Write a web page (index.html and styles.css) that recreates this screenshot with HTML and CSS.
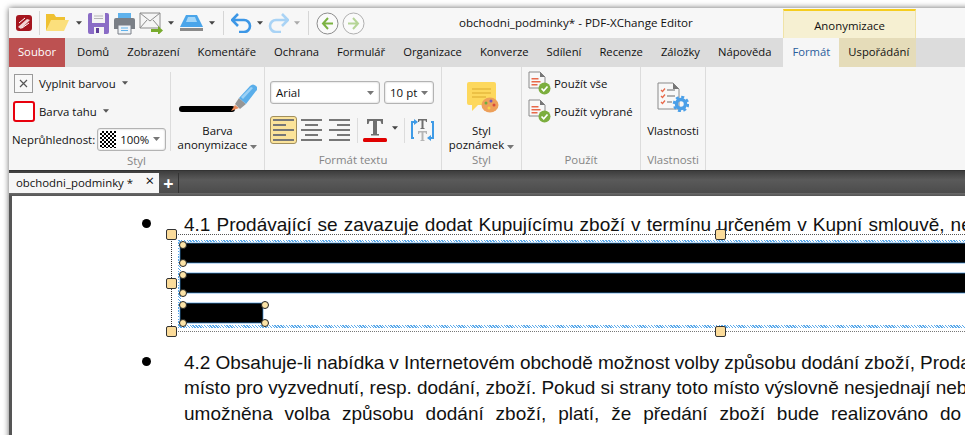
FILE: index.html
```html
<!DOCTYPE html>
<html lang="cs">
<head>
    <meta charset="UTF-8">
    <title>obchodni_podminky* - PDF-XChange Editor</title>
    <link rel="stylesheet" href="styles.css">
</head>
<body>
    <svg class="defs" width="0" height="0">
        <defs>
            <symbol id="doc-check" viewBox="0 0 24 24">
                <path d="M2 1h11l5 5v11H2z" fill="#f8f8f8" stroke="#8a8a8a"/>
                <path d="M13 1v5h5z" fill="#777"/>
                <path d="M4.500 7h7v1.500h-7zM4.500 10h9v1.500h-9zM4.500 13h6v1.500h-6z" fill="#e8694a"/>
                <circle cx="17.500" cy="17.500" r="6" fill="#7cae3e"/>
                <path d="M14.500 17.500l2.200 2.300 3.800-4.300" fill="none" stroke="#fff" stroke-width="1.700"/>
            </symbol>
            <symbol id="caret" viewBox="0 0 7 4">
                <path d="M0 0h7L3.500 4z"/>
            </symbol>
            <symbol id="lines-center" viewBox="0 0 21 24">
                <path d="M0 1h21v2H0zM4 6h13v2H4zM0 11h21v2H0zM4 16h13v2H4zM0 21h21v2H0z" fill="#777"/>
            </symbol>
        </defs>
    </svg>

    <div class="window">
        <div class="titlebar">
            <div class="quick">
                <svg class="qicon app" viewBox="0 0 18 18" width="18" height="18">
                    <rect x="1" y="1" width="16" height="16" rx="3" fill="#a5161f"/>
                    <path d="M3 13l9-8 3 1-9 9z" fill="#f4d6d6"/>
                    <path d="M4 9l6-5M7 14l7-5" stroke="#fff" fill="none"/>
                </svg>
                <span class="qsep"></span>
                <svg class="qicon folder" viewBox="0 0 24 20" width="24" height="20">
                    <path d="M1 18V1h8l2 3h9v4H7z" fill="#efc132"/>
                    <path d="M1 18L6 7h18l-5 11z" fill="#fbdf7c"/>
                </svg>
                <svg class="qcaret" width="6" height="4"><use href="#caret" fill="#444"/></svg>
                <svg class="qicon" viewBox="0 0 23 23" width="23" height="23">
                    <path d="M1 3a2 2 0 012-2h17a2 2 0 012 2v17a2 2 0 01-2 2H3a2 2 0 01-2-2z" fill="#8a6cc6"/>
                    <path d="M5 1h13v10H5z" fill="#f4f4f4"/>
                    <path d="M7 4h9M7 6.500h9" stroke="#b5b5b5"/>
                    <path d="M7 15h10v7H7z" fill="#f4f4f4"/>
                    <path d="M9 16h3v5H9z" fill="#5f3f99"/>
                </svg>
                <svg class="qicon" viewBox="0 0 23 23" width="23" height="23">
                    <path d="M5 1h13v8H5z" fill="#5fb2ec"/>
                    <path d="M1 8a2 2 0 012-2h17a2 2 0 012 2v9H1z" fill="#7a7f86"/>
                    <path d="M5 13h13v9H5z" fill="#eef3f7" stroke="#7a7f86"/>
                    <path d="M8 16h7M8 18.500h7" stroke="#5fb2ec"/>
                </svg>
                <svg class="qicon mail" viewBox="0 0 24 22" width="24" height="22">
                    <path d="M1 1h20v15H1z" fill="#f5f5f5" stroke="#8c8c8c"/>
                    <path d="M1 1l10 8 10-8M1 16l7-8M21 16l-7-8" fill="none" stroke="#8c8c8c"/>
                    <path d="M12 17h7v-3l5 4.500-5 4.500v-3h-7z" fill="#78ab2e"/>
                </svg>
                <svg class="qcaret" width="6" height="4"><use href="#caret" fill="#444"/></svg>
                <svg class="qicon" viewBox="0 0 25 18" width="25" height="18">
                    <path d="M7 1h11l6 12H1z" fill="#4aa5ea"/>
                    <path d="M9 3h7l2 5H7z" fill="#a3d6f8"/>
                    <path d="M1 14h23v3H1z" fill="#8a8a8a"/>
                </svg>
                <svg class="qcaret" width="6" height="4"><use href="#caret" fill="#444"/></svg>
                <span class="qsep"></span>
                <svg class="qicon" viewBox="0 0 21 20" width="21" height="20">
                    <path d="M7 1L1 7l6 6M2 7h11a6 6 0 010 12H8" fill="none" stroke="#3d97e6" stroke-width="2.600"/>
                </svg>
                <svg class="qcaret" width="6" height="4"><use href="#caret" fill="#444"/></svg>
                <svg class="qicon" viewBox="0 0 21 20" width="21" height="20">
                    <path d="M14 1l6 6-6 6M19 7H8a6 6 0 000 12h5" fill="none" stroke="#a9d3f5" stroke-width="2.600"/>
                </svg>
                <svg class="qcaret" width="6" height="4"><use href="#caret" fill="#aaa"/></svg>
                <span class="qsep"></span>
                <svg class="qicon" viewBox="0 0 23 23" width="23" height="23">
                    <circle cx="11.500" cy="11.500" r="10.500" fill="#fafafa" stroke="#8d8d8d"/>
                    <path d="M12 6l-5 5.500 5 5.500M7 11.500h10" fill="none" stroke="#7cb342" stroke-width="2"/>
                </svg>
                <svg class="qicon" viewBox="0 0 23 23" width="23" height="23">
                    <circle cx="11.500" cy="11.500" r="10.500" fill="#fafafa" stroke="#b0b0b0"/>
                    <path d="M11 6l5 5.500-5 5.500M16 11.500H6" fill="none" stroke="#b6d597" stroke-width="2"/>
                </svg>
            </div>
            <div class="doc-title">obchodni_podminky* - PDF-XChange Editor</div>
            <div class="context-head">Anonymizace</div>
        </div>

        <div class="tabs">
            <div class="tab tab-file">Soubor</div>
            <div class="tab">Domů</div>
            <div class="tab">Zobrazení</div>
            <div class="tab">Komentáře</div>
            <div class="tab">Ochrana</div>
            <div class="tab">Formulář</div>
            <div class="tab">Organizace</div>
            <div class="tab">Konverze</div>
            <div class="tab">Sdílení</div>
            <div class="tab">Recenze</div>
            <div class="tab">Záložky</div>
            <div class="tab">Nápověda</div>
            <div class="tab tab-active">Formát</div>
            <div class="tab tab-context">Uspořádání</div>
        </div>

        <div class="ribbon">
            <section class="group group-style">
                <div class="group-body">
                    <div class="style-col">
                        <div class="row">
                            <span class="swatch swatch-none">
                                <svg viewBox="0 0 9 9" width="9" height="9"><path d="M1 1l7 7M8 1L1 8" stroke="#555" stroke-width="1.200"/></svg>
                            </span>
                            <span>Vyplnit barvou</span>
                            <svg class="caret" width="6" height="4"><use href="#caret"/></svg>
                        </div>
                        <div class="row">
                            <span class="swatch swatch-stroke"></span>
                            <span>Barva tahu</span>
                            <svg class="caret" width="6" height="4"><use href="#caret"/></svg>
                        </div>
                        <div class="row row-opacity">
                            <span>Neprůhlednost:</span>
                            <span class="combo combo-opacity">
                                <span class="checker"></span>
                                <span class="combo-val">100%</span>
                                <svg class="caret caret-gray" width="7" height="4"><use href="#caret"/></svg>
                            </span>
                        </div>
                    </div>
                    <div class="inner-sep"></div>
                    <div class="big-btn big-redact">
                        <svg class="brush" viewBox="0 0 78 30" width="78" height="30">
                            <path d="M3 26h50" stroke="#000" stroke-width="6" stroke-linecap="round"/>
                            <path d="M52 28l4-6 4 3z" fill="#e98a5a"/>
                            <path d="M56 21l4-6 7 6-6 5z" fill="#969696"/>
                            <path d="M60 15L71 3q3-3 6 0t0 5L67 21z" fill="#5aaeea"/>
                            <path d="M62 14L72 4l2 1-10 11z" fill="#9ad0f5"/>
                        </svg>
                        <span class="big-label">Barva<br>anonymizace <svg class="caret caret-gray" width="7" height="4"><use href="#caret"/></svg></span>
                    </div>
                </div>
                <div class="group-label">Styl</div>
            </section>

            <section class="group group-text">
                <div class="group-body text-col">
                    <div class="combo-row">
                        <span class="combo combo-font">Arial<svg class="caret caret-gray" width="7" height="4"><use href="#caret"/></svg></span>
                        <span class="combo combo-size">10 pt<svg class="caret caret-gray" width="7" height="4"><use href="#caret"/></svg></span>
                    </div>
                    <div class="format-row">
                        <span class="align-btn align-on">
                            <svg viewBox="0 0 21 24" width="21" height="24"><path d="M0 1h21v2H0zM0 6h13v2H0zM0 11h21v2H0zM0 16h13v2H0zM0 21h21v2H0z" fill="#777"/></svg>
                        </span>
                        <span class="align-btn">
                            <svg width="21" height="24"><use href="#lines-center"/></svg>
                        </span>
                        <span class="align-btn">
                            <svg viewBox="0 0 21 24" width="21" height="24"><path d="M0 1h21v2H0zM8 6h13v2H8zM0 11h21v2H0zM8 16h13v2H8zM0 21h21v2H0z" fill="#777"/></svg>
                        </span>
                        <span class="fmt-sep fmt-sep-first"></span>
                        <svg class="t-color" viewBox="0 0 24 24" width="24" height="24">
                            <path d="M4 1h16v5h-1.500l-1-3H14v13h2v1.500H8V16h2V3H6.500l-1 3H4z" fill="#6e6e6e"/>
                            <rect y="20" width="24" height="4" rx="1.500" fill="#e00000"/>
                        </svg>
                        <svg class="caret caret-t" width="6" height="4"><use href="#caret"/></svg>
                        <span class="fmt-sep"></span>
                        <svg class="t-fit" viewBox="0 0 25 22" width="25" height="22">
                            <path d="M5 3H2v16h2" fill="none" stroke="#3f9be6" stroke-width="2"/>
                            <path d="M4 0l4 3-4 3z" fill="#3f9be6"/>
                            <path d="M20 19h3V3h-2" fill="none" stroke="#3f9be6" stroke-width="2"/>
                            <path d="M21 16l-4 3 4 3z" fill="#3f9be6"/>
                            <path d="M8 0h9v3h-1l-.5-1.500H13.500V9h1v1h-4V9h1V1.500H9.500L9 3H8z" fill="#6e6e6e"/>
                            <path d="M8 12h9v3h-1l-.5-1.500H13.500V21h1v1h-4v-1h1v-7.500H9.500L9 15H8z" fill="#b5b5b5"/>
                        </svg>
                    </div>
                </div>
                <div class="group-label">Formát textu</div>
            </section>

            <section class="group group-note">
                <div class="group-body">
                    <div class="big-btn">
                        <svg class="note-icon" viewBox="0 0 34 34" width="34" height="34">
                            <path d="M2 4a2 2 0 012-2h25a2 2 0 012 2v21H13l-6 6v-6H4a2 2 0 01-2-2z" fill="#fdd85d"/>
                            <path d="M7 9h19M7 13h19M7 17h14" stroke="#e6b93e" stroke-width="1.300"/>
                            <ellipse cx="25" cy="25" rx="8.500" ry="7.500" fill="#eda05a"/>
                            <circle cx="21" cy="23" r="1.500" fill="#6fae3f"/>
                            <circle cx="26" cy="21" r="1.500" fill="#7a58b8"/>
                            <circle cx="29" cy="25" r="1.500" fill="#d84b3c"/>
                            <circle cx="24" cy="28" r="1.500" fill="#f7d04a"/>
                        </svg>
                        <span class="big-label">Styl<br>poznámek <svg class="caret caret-gray" width="7" height="4"><use href="#caret"/></svg></span>
                    </div>
                </div>
                <div class="group-label">Styl</div>
            </section>

            <section class="group group-apply">
                <div class="group-body apply-col">
                    <div class="row row-apply">
                        <svg width="24" height="24"><use href="#doc-check"/></svg>
                        <span>Použít vše</span>
                    </div>
                    <div class="row row-apply">
                        <svg width="24" height="24"><use href="#doc-check"/></svg>
                        <span>Použít vybrané</span>
                    </div>
                </div>
                <div class="group-label">Použít</div>
            </section>

            <section class="group group-props">
                <div class="group-body">
                    <div class="big-btn big-props">
                        <svg class="props-icon" viewBox="0 0 32 30" width="32" height="30">
                            <path d="M1 1h15l6 6v20H1z" fill="#f8f8f8" stroke="#8a8a8a"/>
                            <path d="M16 1v6h6z" fill="#777"/>
                            <path d="M4 8l1.500 1.500L8 6.500M4 14l1.500 1.500L8 12.500M4 20l1.500 1.500L8 18.500" fill="none" stroke="#e8694a" stroke-width="1.300"/>
                            <path d="M10 8h8M10 14h8M10 20h5" stroke="#999" stroke-width="1.300"/>
                            <circle cx="24" cy="22" r="4.500" fill="none" stroke="#4a9fe8" stroke-width="3.500"/>
                            <circle cx="24" cy="22" r="7" fill="none" stroke="#4a9fe8" stroke-width="2.500" stroke-dasharray="3 2.500"/>
                        </svg>
                        <span class="big-label">Vlastnosti</span>
                    </div>
                </div>
                <div class="group-label">Vlastnosti</div>
            </section>
        </div>

        <div class="tabstrip">
            <div class="doc-tab">
                <span>obchodni_podminky *</span>
                <span class="doc-close">×</span>
            </div>
            <div class="doc-add">+</div>
        </div>

        <div class="viewer">
            <div class="page">
                <div class="para">
                    <span class="bullet"></span>
                    <p class="line line-a">4.1 Prodávající se zavazuje dodat Kupujícímu zboží v termínu určeném v Kupní smlouvě, ne</p>
                </div>

                <div class="selection">
                    <div class="hatch"></div>
                    <div class="bar"><i class="dot dot-tl"></i><i class="dot dot-bl"></i></div>
                    <div class="bar"><i class="dot dot-tl"></i><i class="dot dot-bl"></i></div>
                    <div class="bar bar-short">
                        <i class="dot dot-tl"></i><i class="dot dot-bl"></i>
                        <i class="dot dot-tr"></i><i class="dot dot-br"></i>
                    </div>
                    <i class="grip grip-tl"></i>
                    <i class="grip grip-tm"></i>
                    <i class="grip grip-ml"></i>
                    <i class="grip grip-bl"></i>
                    <i class="grip grip-bm"></i>
                </div>

                <div class="para para-two">
                    <span class="bullet"></span>
                    <p class="line line-b">4.2 Obsahuje-li nabídka v Internetovém obchodě možnost volby způsobu dodání zboží, Proda</p>
                    <p class="line line-c">místo pro vyzvednutí, resp. dodání, zboží. Pokud si strany toto místo výslovně nesjednají neb</p>
                    <p class="line line-d">umožněna volba způsobu dodání zboží, platí, že předání zboží bude realizováno do</p>
                </div>
            </div>
        </div>
    </div>
</body>
</html>
```

FILE: styles.css
```css
* {
    box-sizing: border-box;
}

html, body {
    height: 100%;
}

body {
    margin: 0;
    padding: 8px 0 0 9px;
    overflow: hidden;
    background: #fff;
    font-family: "Open Sans", "Noto Sans", sans-serif;
    font-size: 11.400px;
    color: #111;
}

.defs {
    position: absolute;
}

.window {
    display: flex;
    flex-direction: column;
    width: 975px;
    height: 440px;
    background: #f6f6f6;
    box-shadow: 0 0 6px rgba(0, 0, 0, 0.6);
}

/* title bar */

.titlebar {
    display: flex;
    height: 30px;
    background: #f7f7f7;
}

.quick {
    display: flex;
    align-items: center;
    width: 450px;
    padding-left: 6px;
    gap: 3px;
}

.qsep {
    width: 1px;
    height: 24px;
    margin: 0 4px 0 3px;
    background: #d6d6d6;
}

.qcaret {
    margin: 0 2px 0 2px;
}

.folder {
    margin-left: -2px;
    margin-right: 2px;
}

.doc-title {
    width: 324px;
    line-height: 30px;
    font-size: 11.600px;
}

.context-head {
    width: 133px;
    height: 29px;
    margin-top: 1px;
    border-top: 2px solid #f6cd1e;
    border-left: 1px solid #f0e3a8;
    border-right: 1px solid #f0e3a8;
    background: #f6f0d2;
    text-align: center;
    line-height: 30px;
}

/* ribbon tabs */

.tabs {
    display: flex;
    height: 29px;
    background: #dcdcdc;
    font-size: 11.250px;
}

.tab {
    padding: 0 9px;
    line-height: 28px;
}

.tab-file {
    width: 56px;
    padding: 0;
    margin-right: 3px;
    text-align: center;
    background: #bd5151;
    color: #fff;
}

.tab-active {
    margin-left: 3px;
    background: #f6f6f6;
    color: #2a5d9c;
}

.tab-context {
    width: 77px;
    background: #e5dcb9;
}

/* ribbon body */

.ribbon {
    display: flex;
    height: 103px;
    background: #f6f6f6;
}

.group {
    display: flex;
    flex-direction: column;
    border-right: 1px solid #dcdcdc;
}

.group-style {
    width: 256px;
}

.group-text {
    width: 177px;
}

.group-note {
    width: 80px;
}

.group-apply {
    width: 119px;
}

.group-props {
    width: 65px;
}

.group-body {
    display: flex;
    flex: 1;
}

.group-label {
    height: 18px;
    line-height: 16px;
    text-align: center;
    color: #858585;
}

.style-col {
    display: flex;
    flex-direction: column;
    width: 161px;
    padding: 2px 0 0 3px;
}

.row {
    display: flex;
    align-items: center;
    height: 28px;
    gap: 6px;
}

.caret {
    fill: #555;
}

.caret-gray {
    fill: #777;
}

.swatch {
    display: flex;
    align-items: center;
    justify-content: center;
    width: 19px;
    height: 19px;
    margin-left: 2px;
}

.swatch-none {
    border: 1px solid #9a9a9a;
    background: #f8f8f8;
}

.swatch-stroke {
    width: 22px;
    height: 21px;
    margin-left: 1px;
    margin-right: -2px;
    border: 2px solid #e8000d;
    border-radius: 3px;
    background: #fff;
}

.row-opacity {
    gap: 2px;
}

.combo {
    display: flex;
    align-items: center;
    justify-content: space-between;
    height: 23px;
    padding: 0 5px;
    border: 1px solid #b3b3b3;
    border-radius: 3px;
    background: #fff;
    box-shadow: inset 0 0 2px #bbb;
}

.combo-opacity {
    justify-content: flex-start;
    gap: 4px;
    width: 69px;
    padding-left: 2px;
}

.combo-opacity .caret {
    margin-left: auto;
}

.checker {
    width: 16px;
    height: 17px;
    background: repeating-conic-gradient(#000 0 25%, #fff 0 50%) 0 0 / 4px 4px;
}

.inner-sep {
    width: 1px;
    height: 79px;
    margin-top: 5px;
    background: #dcdcdc;
}

.big-btn {
    display: flex;
    flex: 1;
    flex-direction: column;
    align-items: center;
    justify-content: space-between;
    padding: 13px 0 0;
    height: 85px;
}

.big-label {
    text-align: center;
    line-height: 14px;
}

.big-redact {
    padding-top: 16px;
}

.big-props {
    justify-content: flex-start;
    padding-top: 15px;
    gap: 12px;
}

.text-col {
    flex-direction: column;
    padding: 14px 0 0 5px;
}

.combo-row {
    display: flex;
    gap: 4px;
}

.combo-font {
    width: 110px;
    font-size: 11.500px;
}

.combo-size {
    width: 50px;
    font-size: 11.500px;
}

.format-row {
    display: flex;
    align-items: center;
    margin-top: 12px;
    height: 28px;
}

.align-btn {
    display: flex;
    align-items: center;
    justify-content: center;
    width: 27px;
    height: 28px;
    margin-right: 1px;
    border: 1px solid transparent;
}

.align-on {
    border: 1px solid #a18f5e;
    border-radius: 3px;
    background: #fbe39a;
}

.fmt-sep {
    width: 1px;
    height: 25px;
    margin: 0 5px 0 6px;
    background: #dcdcdc;
}

.fmt-sep-first {
    margin-left: 3px;
}

.caret-t {
    margin: 0 0 5px 5px;
    fill: #444;
}

.apply-col {
    flex-direction: column;
    padding: 2px 0 0 5px;
}

.row-apply {
    gap: 3px;
}

/* document tabs */

.tabstrip {
    display: flex;
    height: 23px;
    padding-top: 2px;
    border-top: 1px solid #333;
    background: linear-gradient(#3d3d3d, #5a5a5a 40%, #4c4c4c);
}

.doc-tab {
    display: flex;
    justify-content: space-between;
    width: 150px;
    padding: 0 5px 0 7px;
    line-height: 20px;
    background: #f6f6f6;
}

.doc-close {
    font-size: 15px;
    line-height: 15px;
}

.doc-add {
    width: 20px;
    text-align: center;
    color: #fff;
    font-size: 18px;
    font-weight: 700;
    line-height: 20px;
    border-right: 1px solid #333;
}

/* document page */

.viewer {
    flex: 1;
    padding: 3px 0 0 3px;
    background: linear-gradient(#6a6a6a, #555 3px, #555);
}

.page {
    height: 100%;
    padding-top: 16px;
    background: #fff;
    font-family: "Liberation Sans", Arial, sans-serif;
    font-size: 19px;
    color: #111;
    overflow: hidden;
}

.para {
    position: relative;
    padding-left: 172px;
}

.para-two {
    margin-top: 18px;
}

.line {
    margin: 0;
    line-height: 25.500px;
    white-space: nowrap;
}

.line-a {
    word-spacing: 0.800px;
}

.line-b {
    word-spacing: -0.200px;
}

.line-c {
    word-spacing: -0.100px;
}

.line-d {
    word-spacing: 6.600px;
}

.bullet {
    position: absolute;
    left: 130px;
    top: 7px;
    width: 9px;
    height: 9px;
    border-radius: 50%;
    background: #000;
}

/* selected annotations */

.selection {
    position: relative;
    display: flex;
    flex-direction: column;
    gap: 10px;
    width: 800px;
    height: 98px;
    margin: -4px 0 0 159px;
    padding: 8px 0 0 8px;
    border-top: 1px dotted #555;
    border-bottom: 1px dotted #777;
    border-left: 1px dotted #333;
}

.hatch {
    position: absolute;
    left: 6px;
    right: 0;
    top: 5px;
    bottom: 3px;
    border: 3px solid transparent;
    border-image: repeating-linear-gradient(45deg, #5aa9ea 0 1px, #fff 1px 2px) 3;
}

.bar {
    position: relative;
    height: 20px;
    background: #000;
    border: 1px solid #14344f;
    outline: 1px solid #bcd8f2;
}

.bar-short {
    width: 83px;
}

.dot {
    position: absolute;
    width: 8px;
    height: 8px;
    border: 1px solid #222;
    border-radius: 50%;
    background: #fbe3a6;
}

.dot-tl { left: -2px; top: -3px; }
.dot-bl { left: -2px; bottom: -5px; }
.dot-tr { right: -7px; top: -3px; }
.dot-br { right: -7px; bottom: -5px; }

.grip {
    position: absolute;
    width: 11px;
    height: 11px;
    border: 1px solid #333;
    border-radius: 2px;
    background: #fcdc9a;
}

.grip-tl { left: -6px; top: -6px; }
.grip-tm { left: 543px; top: -6px; }
.grip-ml { left: -6px; top: 43px; }
.grip-bl { left: -6px; bottom: -6px; }
.grip-bm { left: 543px; bottom: -6px; }
```
